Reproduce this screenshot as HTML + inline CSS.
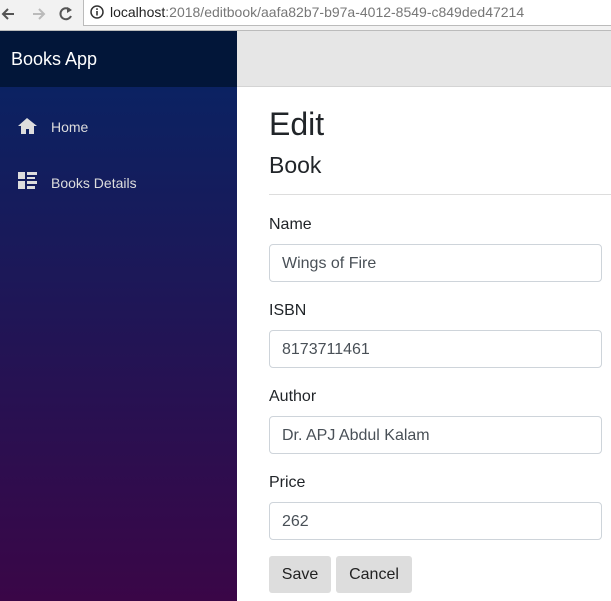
<!DOCTYPE html>
<html><head><style>
*{box-sizing:border-box;margin:0;padding:0}
body{width:611px;height:601px;overflow:hidden;font-family:"Liberation Sans",sans-serif;background:#fff;position:relative}
.chrome{position:absolute;left:0;top:0;width:611px;height:31px;background:#f2f2f2;border-bottom:1px solid #bbb}
.url{position:absolute;left:83px;top:0;width:540px;height:26px;background:#fff;border:1px solid #bbb;border-top:none;font-size:14px;line-height:24px;padding-left:26px;color:#777}
.url b{font-weight:normal;color:#222}
.side{position:absolute;left:0;top:31px;width:237px;height:570px;background:linear-gradient(#0b2262 0%,#0b2262 10%,#3a0647 100%)}
.brand{height:56px;background:#021639;color:#fff;font-size:18px;line-height:56px;padding-left:11px}
.nav{position:absolute;left:18px;color:#ddd;font-size:14px}
.top{position:absolute;left:237px;top:31px;width:374px;height:56px;background:#e6e6e6;border-bottom:1px solid #d4d4d4}
.main{position:absolute;left:269px;top:87px;width:342px;color:#212529}
h1{position:absolute;top:19px;font-size:32px;font-weight:normal}
h2{position:absolute;top:65px;font-size:23px;font-weight:normal}
hr{position:absolute;top:107px;left:0;width:342px;border:none;border-top:1px solid #ddd}
.lbl{position:absolute;font-size:16px}
.in{position:absolute;left:0;width:333px;height:38px;border:1px solid #ced4da;border-radius:4px;font-size:16px;line-height:38px;padding-left:12px;color:#495057}
.btn{position:absolute;top:469px;height:37px;background:#ddd;border-radius:3px;font-size:16px;line-height:38px;text-align:center;color:#222}
</style></head><body>
<div class="chrome">
<svg style="position:absolute;left:0;top:4px" width="80" height="20"><path d="M14 10H3M8 5L3 10L8 15" stroke="#555" stroke-width="2" fill="none"/><path d="M33 10H44M39 5L44 10L39 15" stroke="#bbb" stroke-width="2" fill="none"/><path d="M70 6A5.5 5.5 0 1 0 71 12" stroke="#555" stroke-width="2" fill="none"/><path d="M67 3L72 6L67 9Z" fill="#555"/></svg>
<div class="url"><svg style="position:absolute;left:6px;top:5px" width="14" height="14"><circle cx="7" cy="7" r="6" stroke="#333" stroke-width="1.5" fill="none"/><rect x="6.2" y="6" width="1.6" height="4.5" fill="#333"/><rect x="6.2" y="3.3" width="1.6" height="1.6" fill="#333"/></svg><b>localhost</b>:2018/editbook/aafa82b7-b97a-4012-8549-c849ded47214</div>
</div>
<div class="side"><div class="brand">Books App</div>
<svg style="position:absolute;left:18px;top:86px" width="20" height="18"><path d="M9 1L0 9H3V17H8V12H11V17H16V9H19Z" fill="#ddd"/></svg>
<div class="nav" style="left:51px;top:88px">Home</div>
<svg style="position:absolute;left:18px;top:141px" width="20" height="18"><rect x="0" y="0" width="7" height="7" fill="#ddd"/><rect x="0" y="9" width="7" height="8" fill="#ddd"/><rect x="9" y="0" width="10" height="3" fill="#ddd"/><rect x="9" y="5" width="8" height="2" fill="#ddd"/><rect x="9" y="9" width="10" height="3" fill="#ddd"/><rect x="9" y="14" width="8" height="3" fill="#ddd"/></svg>
<div class="nav" style="left:51px;top:144px">Books Details</div>
</div>
<div class="top"></div>
<div class="main">
<h1>Edit</h1><h2>Book</h2><hr>
<div class="lbl" style="top:129px">Name</div><div class="in" style="top:157px">Wings of Fire</div>
<div class="lbl" style="top:215px">ISBN</div><div class="in" style="top:243px">8173711461</div>
<div class="lbl" style="top:301px">Author</div><div class="in" style="top:329px">Dr. APJ Abdul Kalam</div>
<div class="lbl" style="top:387px">Price</div><div class="in" style="top:415px">262</div>
<div class="btn" style="left:0;width:62px">Save</div>
<div class="btn" style="left:67px;width:76px">Cancel</div>
</div>
</body></html>
